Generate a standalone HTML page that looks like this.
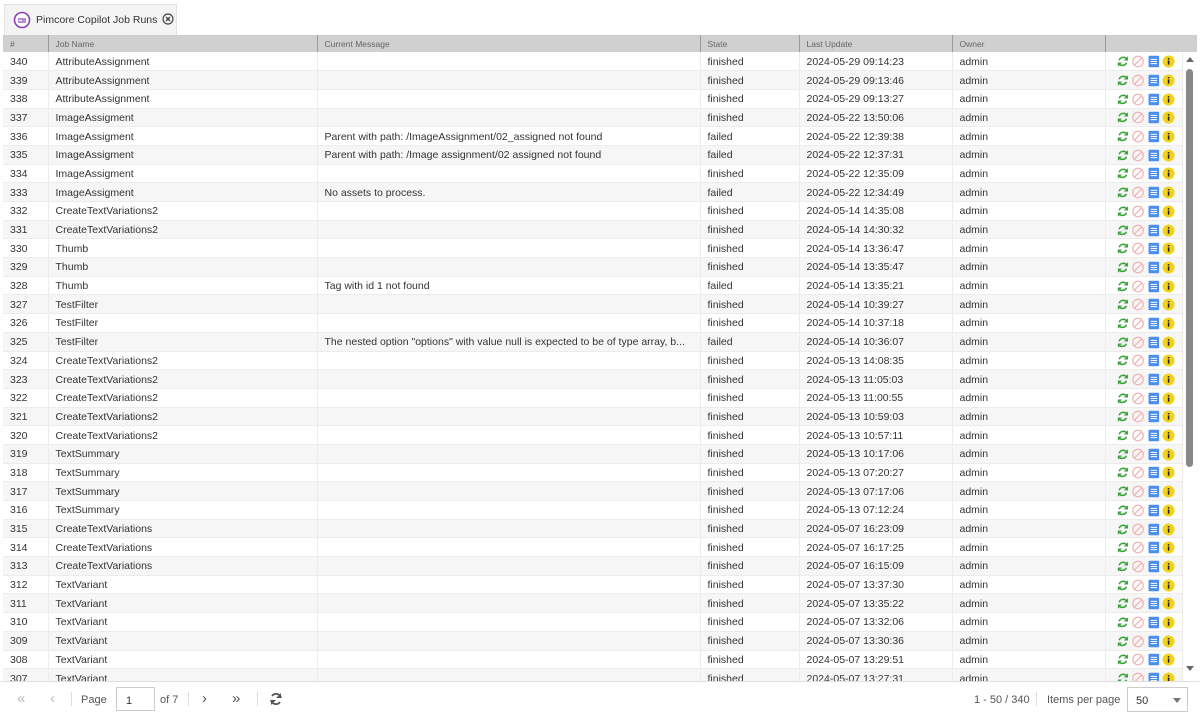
<!DOCTYPE html>
<html><head><meta charset="utf-8"><style>
*{margin:0;padding:0;box-sizing:border-box}
body{width:1200px;height:714px;overflow:hidden;background:#fff;font-family:"Liberation Sans",sans-serif;font-size:10.5px;color:#333;position:relative}
.tabbar{position:absolute;left:0;top:0;width:1200px;height:35px;background:#fff}
.tab{position:absolute;left:4px;top:4px;width:173px;height:31px;background:#f4f4f4;border:1px solid #e2e2e2;border-bottom:none}
.tab .t{position:absolute;left:31px;top:9px;font-size:10.5px;color:#333}
.grid{position:absolute;left:3px;top:35px;width:1194px;height:646px;overflow:hidden}
.hstrip{position:absolute;left:0;top:0;width:1194px;height:17px;background:#d0d0d0}
table{position:relative;border-collapse:collapse;table-layout:fixed;width:1179px}
th{height:17px;background:#d0d0d0;color:#666;font-weight:normal;font-size:8.5px;text-align:left;padding-left:7px;border-right:1px solid #9a9a9a}
td{height:18.7px;padding-left:7px;padding-top:1px;white-space:nowrap;overflow:hidden;border-right:1px solid #ececec;border-bottom:1px solid #ececec;font-size:10.5px}
tr:nth-child(even) td{background:#f6f6f6}
td.a{padding-left:11px;font-size:0}
.sb{position:absolute;left:1180px;top:17px;width:14px;height:629px;background:#fff}
.thumb{position:absolute;width:7px;height:398px;background:#888;border-radius:4px}
.footer{position:absolute;left:0;top:681px;width:1200px;height:33px;background:#fff;border-top:1px solid #e0e0e0;color:#555;font-size:11px}
.footer span{position:absolute;top:12px}
</style></head><body>
<div class="tabbar"><div class="tab">
<svg style="position:absolute;left:8px;top:6px" width="18" height="18" viewBox="0 0 18 18"><circle cx="9" cy="9" r="7.5" fill="#fff" stroke="#8a3fb5" stroke-width="1.6"/><rect x="5" y="7" width="8" height="5" fill="#b98bd6"/><path d="M6 9.5h3" stroke="#fff" stroke-width="1"/></svg>
<span class="t">Pimcore Copilot Job Runs</span>
<svg style="position:absolute;left:157px;top:8px" width="12" height="12" viewBox="0 0 12 12"><circle cx="6" cy="6" r="5" fill="none" stroke="#444" stroke-width="1.2"/><path d="M4 4l4 4M8 4l-4 4" stroke="#444" stroke-width="1.4"/></svg>
</div></div>
<div class="grid">
<div class="hstrip"></div>
<table>
<colgroup><col style="width:45px"><col style="width:269px"><col style="width:383px"><col style="width:99px"><col style="width:153px"><col style="width:153px"><col style="width:77px"></colgroup>
<tr><th>#</th><th>Job Name</th><th>Current Message</th><th>State</th><th>Last Update</th><th>Owner</th><th style="border-right:none"></th></tr>
<tbody id="b">
<tr><td>340</td><td>AttributeAssignment</td><td></td><td>finished</td><td>2024-05-29 09:14:23</td><td>admin</td><td class="a"></td></tr>
<tr><td>339</td><td>AttributeAssignment</td><td></td><td>finished</td><td>2024-05-29 09:13:46</td><td>admin</td><td class="a"></td></tr>
<tr><td>338</td><td>AttributeAssignment</td><td></td><td>finished</td><td>2024-05-29 09:13:27</td><td>admin</td><td class="a"></td></tr>
<tr><td>337</td><td>ImageAssigment</td><td></td><td>finished</td><td>2024-05-22 13:50:06</td><td>admin</td><td class="a"></td></tr>
<tr><td>336</td><td>ImageAssigment</td><td>Parent with path: /ImageAssignment/02_assigned not found</td><td>failed</td><td>2024-05-22 12:39:38</td><td>admin</td><td class="a"></td></tr>
<tr><td>335</td><td>ImageAssigment</td><td>Parent with path: /Image assignment/02 assigned not found</td><td>failed</td><td>2024-05-22 12:37:31</td><td>admin</td><td class="a"></td></tr>
<tr><td>334</td><td>ImageAssigment</td><td></td><td>finished</td><td>2024-05-22 12:35:09</td><td>admin</td><td class="a"></td></tr>
<tr><td>333</td><td>ImageAssigment</td><td>No assets to process.</td><td>failed</td><td>2024-05-22 12:34:49</td><td>admin</td><td class="a"></td></tr>
<tr><td>332</td><td>CreateTextVariations2</td><td></td><td>finished</td><td>2024-05-14 14:35:08</td><td>admin</td><td class="a"></td></tr>
<tr><td>331</td><td>CreateTextVariations2</td><td></td><td>finished</td><td>2024-05-14 14:30:32</td><td>admin</td><td class="a"></td></tr>
<tr><td>330</td><td>Thumb</td><td></td><td>finished</td><td>2024-05-14 13:36:47</td><td>admin</td><td class="a"></td></tr>
<tr><td>329</td><td>Thumb</td><td></td><td>finished</td><td>2024-05-14 13:35:47</td><td>admin</td><td class="a"></td></tr>
<tr><td>328</td><td>Thumb</td><td>Tag with id 1 not found</td><td>failed</td><td>2024-05-14 13:35:21</td><td>admin</td><td class="a"></td></tr>
<tr><td>327</td><td>TestFilter</td><td></td><td>finished</td><td>2024-05-14 10:39:27</td><td>admin</td><td class="a"></td></tr>
<tr><td>326</td><td>TestFilter</td><td></td><td>finished</td><td>2024-05-14 10:37:18</td><td>admin</td><td class="a"></td></tr>
<tr><td>325</td><td>TestFilter</td><td>The nested option "options" with value null is expected to be of type array, b...</td><td>failed</td><td>2024-05-14 10:36:07</td><td>admin</td><td class="a"></td></tr>
<tr><td>324</td><td>CreateTextVariations2</td><td></td><td>finished</td><td>2024-05-13 14:08:35</td><td>admin</td><td class="a"></td></tr>
<tr><td>323</td><td>CreateTextVariations2</td><td></td><td>finished</td><td>2024-05-13 11:05:03</td><td>admin</td><td class="a"></td></tr>
<tr><td>322</td><td>CreateTextVariations2</td><td></td><td>finished</td><td>2024-05-13 11:00:55</td><td>admin</td><td class="a"></td></tr>
<tr><td>321</td><td>CreateTextVariations2</td><td></td><td>finished</td><td>2024-05-13 10:59:03</td><td>admin</td><td class="a"></td></tr>
<tr><td>320</td><td>CreateTextVariations2</td><td></td><td>finished</td><td>2024-05-13 10:57:11</td><td>admin</td><td class="a"></td></tr>
<tr><td>319</td><td>TextSummary</td><td></td><td>finished</td><td>2024-05-13 10:17:06</td><td>admin</td><td class="a"></td></tr>
<tr><td>318</td><td>TextSummary</td><td></td><td>finished</td><td>2024-05-13 07:20:27</td><td>admin</td><td class="a"></td></tr>
<tr><td>317</td><td>TextSummary</td><td></td><td>finished</td><td>2024-05-13 07:17:06</td><td>admin</td><td class="a"></td></tr>
<tr><td>316</td><td>TextSummary</td><td></td><td>finished</td><td>2024-05-13 07:12:24</td><td>admin</td><td class="a"></td></tr>
<tr><td>315</td><td>CreateTextVariations</td><td></td><td>finished</td><td>2024-05-07 16:23:09</td><td>admin</td><td class="a"></td></tr>
<tr><td>314</td><td>CreateTextVariations</td><td></td><td>finished</td><td>2024-05-07 16:17:25</td><td>admin</td><td class="a"></td></tr>
<tr><td>313</td><td>CreateTextVariations</td><td></td><td>finished</td><td>2024-05-07 16:15:09</td><td>admin</td><td class="a"></td></tr>
<tr><td>312</td><td>TextVariant</td><td></td><td>finished</td><td>2024-05-07 13:37:30</td><td>admin</td><td class="a"></td></tr>
<tr><td>311</td><td>TextVariant</td><td></td><td>finished</td><td>2024-05-07 13:35:22</td><td>admin</td><td class="a"></td></tr>
<tr><td>310</td><td>TextVariant</td><td></td><td>finished</td><td>2024-05-07 13:32:06</td><td>admin</td><td class="a"></td></tr>
<tr><td>309</td><td>TextVariant</td><td></td><td>finished</td><td>2024-05-07 13:30:36</td><td>admin</td><td class="a"></td></tr>
<tr><td>308</td><td>TextVariant</td><td></td><td>finished</td><td>2024-05-07 13:29:51</td><td>admin</td><td class="a"></td></tr>
<tr><td>307</td><td>TextVariant</td><td></td><td>finished</td><td>2024-05-07 13:27:31</td><td>admin</td><td class="a"></td></tr>
</tbody></table>
<div class="sb"><div style="position:absolute;left:3px;top:5px;border:4px solid transparent;border-bottom:5px solid #666;border-top:none;width:0;height:0"></div><div class="thumb" style="left:3px;top:17px"></div><div style="position:absolute;left:3px;top:614px;border:4px solid transparent;border-top:5px solid #666;border-bottom:none;width:0;height:0"></div></div>
</div>
<div class="footer">
<span style="left:17px;color:#bbb;top:8px;font-size:15px">«</span>
<span style="left:50px;color:#bbb;top:8px;font-size:15px">‹</span>
<span style="left:71px;top:10px;width:1px;height:14px;background:#ddd"></span>
<span style="left:81px">Page</span>
<div style="position:absolute;left:116px;top:5px;width:39px;height:24px;border:1px solid #ccc;padding:7px 0 0 9px;font-size:11px;color:#333">1</div>
<span style="left:160px">of 7</span>
<span style="left:188px;top:10px;width:1px;height:14px;background:#ddd"></span>
<span style="left:202px;top:8px;font-size:15px">›</span>
<span style="left:232px;top:8px;font-size:15px">»</span>
<span style="left:257px;top:10px;width:1px;height:14px;background:#ddd"></span>
<svg style="position:absolute;left:269px;top:10px" width="14" height="14" viewBox="0 0 14 14"><path d="M12 6A5 5 0 0 0 3 4M2 8a5 5 0 0 0 9 2" fill="none" stroke="#555" stroke-width="1.8"/><path d="M12 1v5H7z M2 13V8h5z" fill="#555"/></svg>
<span style="left:974px">1 - 50 / 340</span>
<span style="left:1036px;top:10px;width:1px;height:14px;background:#ddd"></span>
<span style="left:1047px">Items per page</span>
<div style="position:absolute;left:1127px;top:5px;width:61px;height:25px;border:1px solid #ccc;padding:7px 0 0 8px;font-size:11px;color:#333">50<span style="left:45px;top:10px;border:4px solid transparent;border-top:5px solid #777;border-bottom:none;width:0;height:0"></span></div>
</div>
<svg width="0" height="0" style="position:absolute"><defs>
<symbol id="ic" viewBox="0 0 58 12">
<path d="M9.3 3.5A4.3 4.3 0 0 0 2 4.8M1.8 8.2A4.3 4.3 0 0 0 9 7.2" fill="none" stroke="#3aa63a" stroke-width="1.5"/><path d="M10.5 1v4h-4z M0.8 11V7h4z" fill="#3aa63a"/>
<circle cx="20" cy="6" r="5" fill="none" stroke="#f2b4b4" stroke-width="1.2"/><path d="M16.6 9.4l6.8-6.8" stroke="#f2b4b4" stroke-width="1.2"/>
<rect x="30" y="0.5" width="10" height="11" rx="1" fill="#4b8ef0"/><path d="M32 4h6M32 6h6M32 8h6" stroke="#fff" stroke-width="0.9"/>
<circle cx="49" cy="6" r="5.7" fill="#f0d318"/><rect x="48.3" y="5" width="1.5" height="4" fill="#222"/><rect x="48.3" y="2.7" width="1.5" height="1.4" fill="#222"/>
</symbol></defs></svg>
<script>
document.querySelectorAll('td.a').forEach(function(t){t.innerHTML='<svg width="61" height="13" viewBox="0 0 58 12" style="vertical-align:middle"><use href="#ic"/></svg>';});
</script>
</body></html>
